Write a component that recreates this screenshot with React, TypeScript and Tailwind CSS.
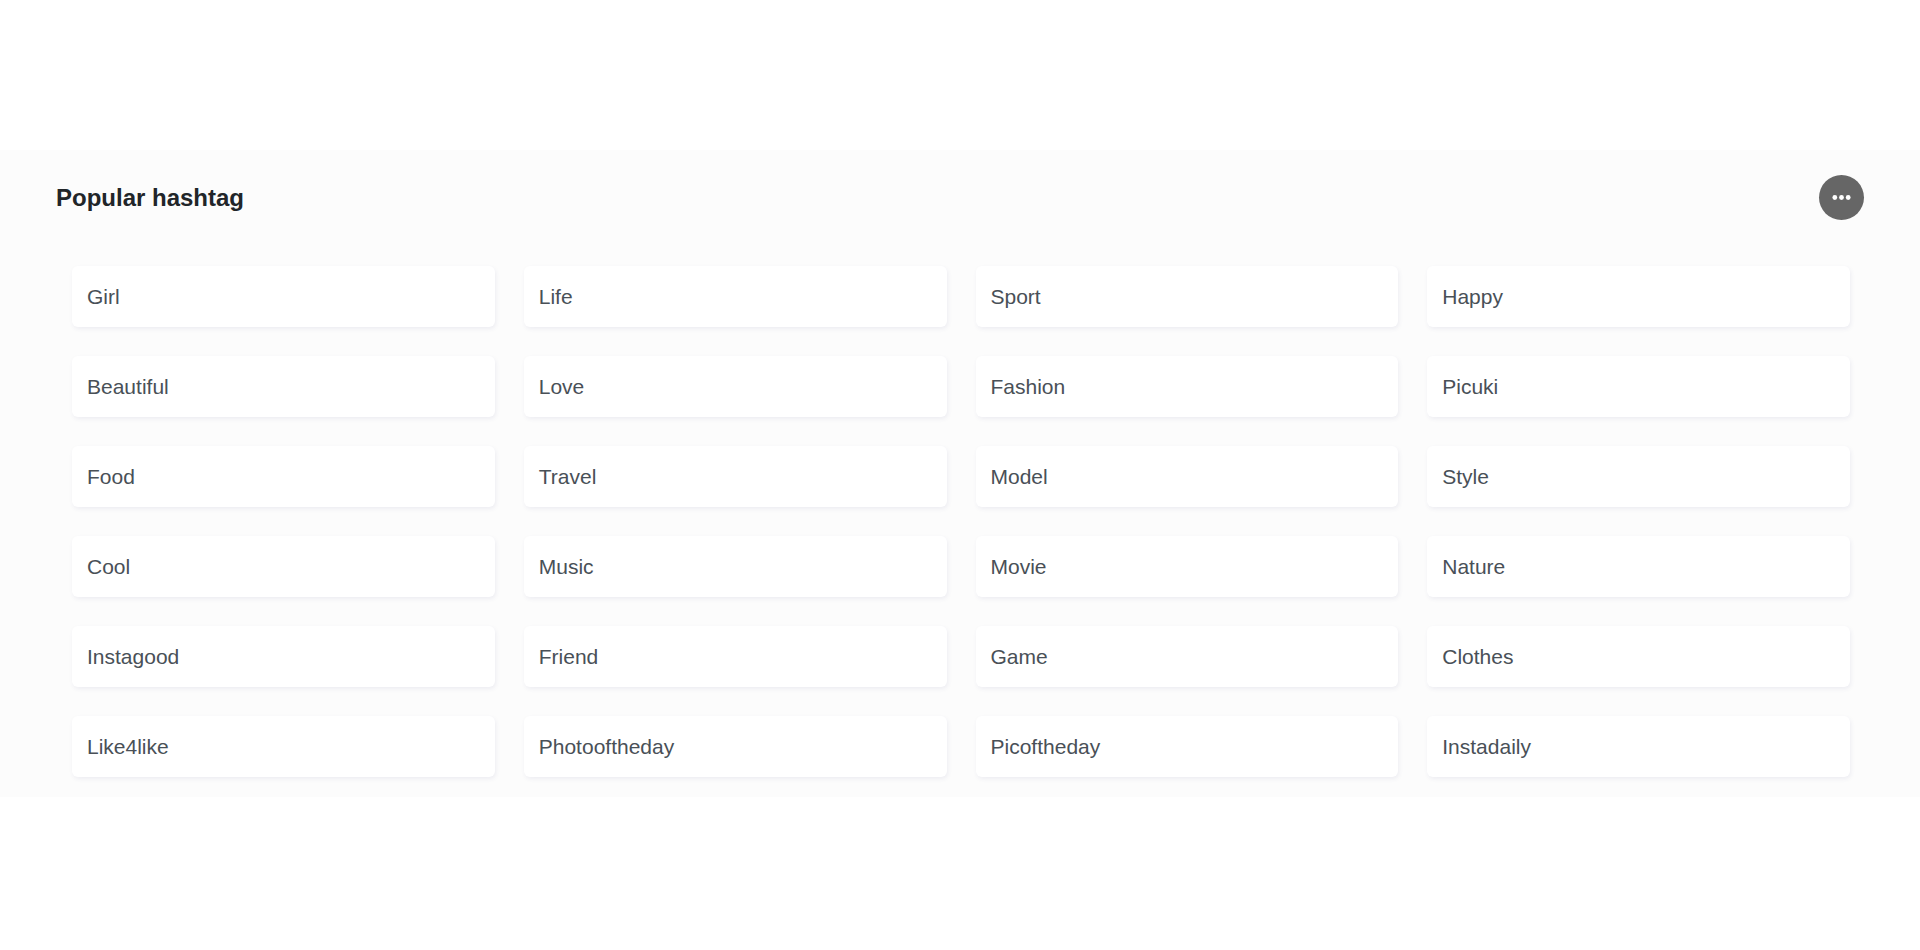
const hashtags = [
  'Girl', 'Life', 'Sport', 'Happy',
  'Beautiful', 'Love', 'Fashion', 'Picuki',
  'Food', 'Travel', 'Model', 'Style',
  'Cool', 'Music', 'Movie', 'Nature',
  'Instagood', 'Friend', 'Game', 'Clothes',
  'Like4like', 'Photooftheday', 'Picoftheday', 'Instadaily',
]

export default function App() {
  return (
    <div className="min-h-screen bg-white py-[150px] font-['Liberation_Sans',Arial,sans-serif]">
      <section className="bg-[#fcfcfc] px-14 pt-[25px] pb-5">
        {/* Header */}
        <div className="flex items-center justify-between">
          <h2 className="text-2xl leading-7 font-bold text-[#212529]">Popular hashtag</h2>
          <button
            type="button"
            aria-label="More"
            className="flex h-[45px] w-[45px] items-center justify-center rounded-full bg-[#666666]"
          >
            <svg width="19" height="5" viewBox="0 0 19 5" fill="#ffffff" aria-hidden="true">
              <circle cx="2.8" cy="2.5" r="2.4" />
              <circle cx="9.5" cy="2.5" r="2.4" />
              <circle cx="16.2" cy="2.5" r="2.4" />
            </svg>
          </button>
        </div>

        {/* Tags */}
        <ul className="mt-[46px] grid grid-cols-4 gap-[29px] pr-3.5 pl-4">
          {hashtags.map((tag) => (
            <li key={tag}>
              <a
                href="#"
                className="block rounded-md bg-white px-[15px] py-4 text-[21px] leading-[29px] text-[#495057] shadow-[1px_2px_4px_rgba(60,60,130,0.08)]"
              >
                {tag}
              </a>
            </li>
          ))}
        </ul>
      </section>
    </div>
  )
}
